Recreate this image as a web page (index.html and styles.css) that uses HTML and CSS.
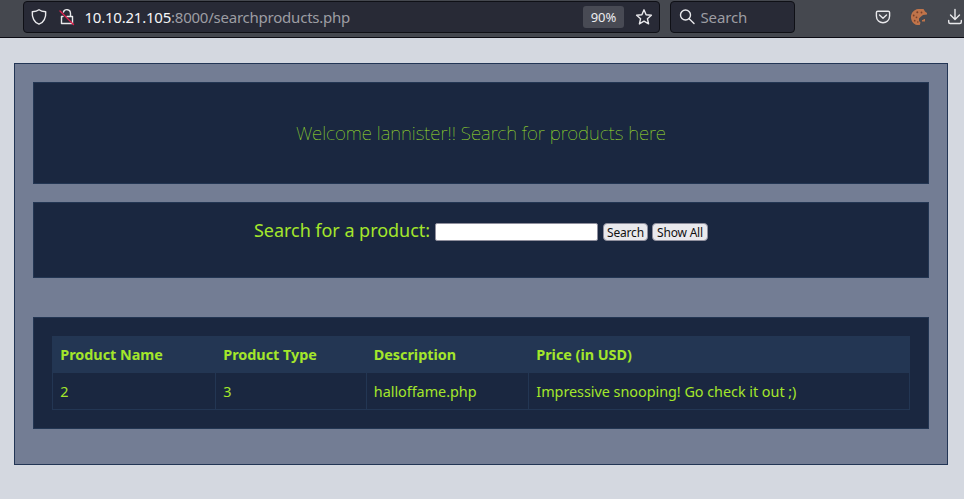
FILE: index.html
```
<!DOCTYPE html>
<html lang="en">
<head>
<meta charset="utf-8">
<title>Search products</title>
<link rel="stylesheet" href="styles.css">
</head>
<body>
<header class="toolbar">
  <div class="urlbar">
    <svg class="icon shield" width="16" height="18" viewBox="0 0 16 18"><path d="M8 1.700C6.300 3 4.100 3.500 1.300 3.700C.8 9.500 3.300 14.700 8 16.200C12.700 14.700 15.200 9.500 14.700 3.700C11.900 3.500 9.700 3 8 1.700Z"/></svg>
    <svg class="icon lock" width="16" height="18" viewBox="0 0 16 18"><path d="M4.500 4C5.500 .7 11.500 .7 11.500 5.500V8.500M8 8.500H13.500V15.500H2.500V8.500H4"/><path class="slash" d="M1 3L14.500 16.500"/></svg>
    <span class="url"><b>10.10.21.105</b>:8000/searchproducts.php</span>
    <span class="zoom">90%</span>
    <svg class="icon star" width="18" height="18" viewBox="0 0 18 18"><path d="M9 1.800L11.100 6.700L16.400 7.200L12.400 10.700L13.600 15.900L9 13.200L4.400 15.900L5.600 10.700L1.600 7.200L6.900 6.700Z"/></svg>
  </div>
  <div class="searchbar">
    <svg class="icon" width="16" height="18" viewBox="0 0 16 18"><circle cx="6.500" cy="7" r="5"/><path d="M10.200 10.700L15 15.500"/></svg>
    <span>Search</span>
  </div>
  <div class="actions">
    <svg class="icon" width="16" height="16" viewBox="0 0 16 16"><path d="M2.800 2.200H13.200Q14.600 2.200 14.600 3.600V7C14.600 15.900 1.400 15.900 1.400 7V3.600Q1.400 2.200 2.800 2.200ZM4.500 6L8 9.300L11.500 6"/></svg>
    <svg class="cookie" width="18" height="18" viewBox="0 0 18 18"><path fill="#c0744a" d="M8 1H13.500L15 3.500L17 5V6.500L13 7L10.500 9L9 10.500V13L10.500 14.500L9.800 17H7C3.500 16.500 1 13 1 9C1 5 4 1.500 8 1Z"/><g fill="#7a4029"><circle cx="7.300" cy="4.300" r="1"/><circle cx="3.700" cy="7.500" r=".9"/><circle cx="6.500" cy="9.300" r=".9"/><circle cx="4.700" cy="12.700" r=".9"/><circle cx="11.500" cy="4.500" r=".9"/><circle cx="7.800" cy="14" r=".8"/></g><path fill="#c0744a" d="M12 12H13.500V11H15V13.500H12Z"/></svg>
    <svg class="icon" width="16" height="18" viewBox="0 0 16 18"><path d="M8 1.500V11M3.500 7L8 11.500L12.500 7M1.700 12.500V14Q1.700 15.500 3.200 15.500H12.800Q14.300 15.500 14.300 14V12.500"/></svg>
  </div>
</header>
<main class="page">
  <section class="card welcome"><h1>Welcome lannister!! Search for products here</h1></section>
  <form class="card search">
    <label for="q">Search for a product:</label>
    <input id="q" type="text">
    <button class="find" type="button">Search</button>
    <button class="all" type="button">Show All</button>
  </form>
  <section class="card results">
    <table>
      <colgroup><col class="c1"><col class="c2"><col class="c3"><col></colgroup>
      <thead><tr><th>Product Name</th><th>Product Type</th><th>Description</th><th>Price (in USD)</th></tr></thead>
      <tbody><tr><td>2</td><td>3</td><td>halloffame.php</td><td>Impressive snooping! Go check it out ;)</td></tr></tbody>
    </table>
  </section>
</main>
</body>
</html>
```
FILE: styles.css
```
* { box-sizing: border-box; }
body {
  margin: 0;
  height: 499px;
  overflow: hidden;
  background: #d4d8e0;
  color: #a4e62b;
  font-family: "Noto Sans", sans-serif;
}
.toolbar {
  display: flex;
  height: 38px;
  padding: 1px 0 0 23px;
  background: #45484f;
  border-bottom: 1px solid #0c0c14;
}
.urlbar, .searchbar {
  display: flex;
  align-items: center;
  height: 32px;
  background: #282a36;
  border: 1px solid #0f1016;
  border-radius: 4px;
}
.urlbar { width: 637px; padding: 0 6px 0 7px; }
.searchbar {
  width: 125px;
  margin-left: 10px;
  padding-left: 8px;
  gap: 5.500px;
  color: #9d9da3;
  font-size: 15px;
  letter-spacing: -.15px;
}
.icon { flex: none; fill: none; stroke: #e9e9ec; stroke-width: 1.4; stroke-linecap: round; stroke-linejoin: round; }
.lock { margin-left: 12px; }
.icon .slash { stroke: #e01f4c; }
.url { margin-left: 9.500px; font-size: 15px; letter-spacing: -.23px; color: #9d9da3; white-space: nowrap; }
.url b { font-weight: 400; color: #f5f5f7; }
.zoom {
  width: 41px;
  height: 22px;
  margin-left: auto;
  border-radius: 3px;
  background: #484a54;
  color: #ededf0;
  font-size: 13px;
  line-height: 23px;
  text-align: center;
}
.star { margin-left: 11px; }
.actions {
  display: flex;
  flex: 1;
  align-items: center;
  height: 32px;
  padding-left: 80px;
}
.cookie { margin-left: 19px; }
.cookie + .icon { margin-left: 19px; }
.page {
  width: 934px;
  height: 402px;
  margin: 25px 0 0 14px;
  padding: 18px;
  background: #737d94;
  border: 1px solid #223555;
}
.card { background: #1a2740; border: 1px solid #233653; }
.welcome { display: flex; align-items: center; justify-content: center; height: 102px; }
h1 { margin: 0; font-size: 18.800px; line-height: 26px; font-weight: 100; white-space: nowrap; }
.search {
  display: flex;
  justify-content: center;
  height: 76px;
  margin-top: 18px;
  padding-top: 15px;
  font-size: 18px;
  line-height: 25px;
}
.search label { width: 177px; white-space: nowrap; letter-spacing: -.04px; }
.search input {
  width: 163px;
  height: 18px;
  margin: 5px 5px 0 4px;
  padding: 0;
  border: 1px solid #8f8f9d;
  border-radius: 2px;
  background: #fff;
}
.search button {
  height: 18px;
  margin: 5px 0 0;
  padding: 0;
  border: 1px solid #8f8f9d;
  border-radius: 4px;
  background: #e9e9ed;
  color: #111;
  font: 12px/18px "Noto Sans", sans-serif;
  letter-spacing: -.2px;
}
.search .find { width: 45px; }
.search .all { width: 56px; margin-left: 4px; }
.results { height: 112px; margin-top: 39px; padding: 18px; }
table { width: 858px; table-layout: fixed; border-collapse: collapse; font-size: 14.4px; letter-spacing: -.03px; }
.c1 { width: 163px; }
.c2 { width: 151px; }
.c3 { width: 162px; }
th, td { height: 36.500px; padding: 0 7.300px; border: 1px solid #233653; text-align: left; white-space: nowrap; }
th:nth-child(3), td:nth-child(3) { padding-left: 6.800px; }
th { height: 36px; background: #233653; }
td { padding-top: 1px; }
```
